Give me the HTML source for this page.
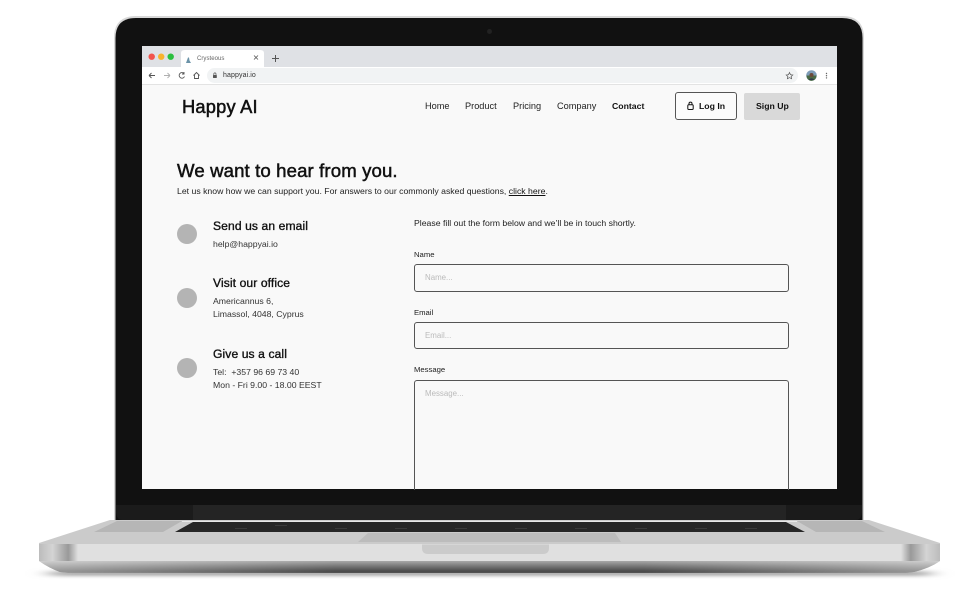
<!DOCTYPE html>
<html><head><meta charset="utf-8"><title>Happy AI</title>
<style>
html,body{margin:0;padding:0;background:#fff}
#r{position:relative;width:960px;height:606px;overflow:hidden;background:#fff;font-family:"Liberation Sans",sans-serif;color:#111;filter:blur(.3px)}
#r svg.bg{position:absolute;left:0;top:0}
.t{position:absolute;white-space:nowrap;line-height:1}
#scr{position:absolute;left:142px;top:46px;width:695px;height:443px;background:#f9f9f9;overflow:hidden}
.box{position:absolute;left:414px;width:372.500px;border:1px solid #555;border-radius:3px;box-sizing:content-box}
.c{position:absolute;left:177px;width:20px;height:20px;border-radius:50%;background:#b4b4b4}
</style></head><body><div id="r">
<svg class="bg" width="960" height="606" viewBox="0 0 960 606">
<defs>
<linearGradient id="f" x1="0" y1="0" x2="0" y2="1"><stop offset="0" stop-color="#a8a8a8"/><stop offset=".4" stop-color="#7a7a7a"/><stop offset=".85" stop-color="#4a4a4a"/><stop offset="1" stop-color="#555"/></linearGradient>
<linearGradient id="fs" x1="0" y1="0" x2="1" y2="0"><stop offset="0" stop-color="#fff" stop-opacity=".45"/><stop offset=".33" stop-color="#fff" stop-opacity="0"/><stop offset=".67" stop-color="#fff" stop-opacity="0"/><stop offset="1" stop-color="#fff" stop-opacity=".45"/></linearGradient>
<linearGradient id="cl" x1="0" y1="0" x2="1" y2="0"><stop offset="0" stop-color="#bcbcbc"/><stop offset=".35" stop-color="#d4d4d4"/><stop offset=".75" stop-color="#999"/><stop offset="1" stop-color="#e0e0e0"/></linearGradient>
<linearGradient id="cr" x1="1" y1="0" x2="0" y2="0"><stop offset="0" stop-color="#bcbcbc"/><stop offset=".35" stop-color="#d4d4d4"/><stop offset=".75" stop-color="#999"/><stop offset="1" stop-color="#e0e0e0"/></linearGradient>
<filter id="b" x="-5%" y="-200%" width="110%" height="500%"><feGaussianBlur stdDeviation="10 1.500"/></filter>
</defs>
<rect x="50" y="571" width="880" height="5" fill="#aaa" filter="url(#b)"/>
<path d="M114 521V38Q114 16 136 16H842Q864 16 864 38V521Z" fill="#d8d8d8"/>
<path d="M115.500 521V38Q115.500 18 136 18H842Q862.500 18 862.500 38V521Z" fill="#111"/>
<path d="M116 505H862V510Q862 520 856 520H122Q116 520 116 510Z" fill="#1b1b1b"/>
<rect x="193" y="505" width="593" height="16" fill="#242424"/>
<circle cx="489.500" cy="31.500" r="2.500" fill="#222"/>
<path d="M110 520H869L940 543V544H39V543Z" fill="#cbcbcb"/>
<path d="M94 532L117 521H182L163 532Z" fill="#b6b6b6"/>
<path d="M885 532L862 521H797L816 532Z" fill="#b6b6b6"/>
<path d="M175 532L193 522H786L805 532Z" fill="#262626"/>
<path d="M358 542L368 533H615L621 542Z" fill="#bcbcbc"/>
<g fill="#3a3a3a"><rect x="235" y="528" width="12" height="1"/><rect x="275" y="525" width="12" height="1"/><rect x="335" y="528" width="12" height="1"/><rect x="395" y="528" width="12" height="1"/><rect x="455" y="528" width="12" height="1"/><rect x="515" y="528" width="12" height="1"/><rect x="575" y="528" width="12" height="1"/><rect x="635" y="528" width="12" height="1"/><rect x="695" y="528" width="12" height="1"/><rect x="745" y="528" width="12" height="1"/></g>
<rect x="182" y="521" width="615" height="1" fill="#e8e8e8"/>
<rect x="39" y="544" width="901" height="17" fill="#e0e0e0"/>
<rect x="39" y="544" width="39" height="17" fill="url(#cl)"/>
<rect x="901" y="544" width="39" height="17" fill="url(#cr)"/>
<path d="M422 544.500H549V548Q549 554 543 554H428Q422 554 422 548Z" fill="#cbcbcb"/>
<path d="M39 561H940Q930 568 914 572L905 573H70L60 572Q49 568 39 561Z" fill="url(#f)"/>
<path d="M39 561H940Q930 568 914 572L905 573H70L60 572Q49 568 39 561Z" fill="url(#fs)"/>
</svg>

<div id="scr">
<svg width="695" height="39" viewBox="0 0 695 39" style="position:absolute;left:0;top:0">
<rect width="695" height="21" fill="#dfe1e5"/>
<rect y="21" width="695" height="17" fill="#fff"/>
<rect y="38" width="695" height="1" fill="#e3e3e3"/>
<circle cx="9.700" cy="10.700" r="3.200" fill="#f2544c"/><circle cx="19.200" cy="10.700" r="3.200" fill="#f8b32e"/><circle cx="28.700" cy="10.700" r="3.200" fill="#2bbf3f"/>
<path d="M39 7Q39 4 43 4H118Q122 4 122 7V21H39Z" fill="#fff"/>
<path d="M44 17L46 11.500L47 11.500L47.500 14.500L49 17Z" fill="#6b93a8"/>
<path d="M112 9.500L116 13.500M116 9.500L112 13.500" stroke="#555" stroke-width=".8"/>
<path d="M133.500 9V16M130 12.500H137" stroke="#555" stroke-width="1"/>
<rect x="65" y="22" width="591" height="15" rx="7.500" fill="#f1f3f4"/>
<path d="M7 29.500H13M7 29.500L9.500 27M7 29.500L9.500 32" stroke="#555" stroke-width=".9" fill="none"/>
<path d="M22 29.500H28M28 29.500L25.500 27M28 29.500L25.500 32" stroke="#b0b0b0" stroke-width=".9" fill="none"/>
<path d="M42 27.500A2.800 2.800 0 1 0 42.500 30.500M42 26V28H40" stroke="#555" stroke-width=".9" fill="none"/>
<path d="M51.500 29.500L54.500 26.500L57.500 29.500M52.500 29V32.500H56.500V29" stroke="#555" stroke-width=".9" fill="none"/>
<rect x="71" y="29" width="3.800" height="3" rx=".5" fill="#555"/><path d="M71.800 29V28A1.100 1.100 0 0 1 74 28V29" stroke="#555" stroke-width=".7" fill="none"/>
<path d="M647.500 26.500L648.500 28.700L650.800 29L649.100 30.500L649.600 32.700L647.500 31.600L645.400 32.700L645.900 30.500L644.200 29L646.500 28.700Z" stroke="#555" stroke-width=".7" fill="none"/>
<circle cx="669.500" cy="29.500" r="5.300" fill="#7e9cb8"/><path d="M664.500 29.500H674.500A5 5 0 0 1 665 32Z" fill="#4a6a45"/><circle cx="669.500" cy="29" r="2" fill="#6b4a3a"/><path d="M666.500 34Q669.500 30.500 672.500 34Z" fill="#2f3a4a"/>
<g fill="#666"><circle cx="684.500" cy="27.500" r=".7"/><circle cx="684.500" cy="29.700" r=".7"/><circle cx="684.500" cy="31.900" r=".7"/></g>
</svg>
<div class="t" style="left:55px;top:9.500px;font-size:6.100px;color:#666">Crysteous</div>
<div class="t" style="left:81px;top:25.500px;font-size:7px;color:#333;letter-spacing:.1px">happyai.io</div>
</div>

<div class="t" style="left:182px;top:98px;font-size:18.300px;letter-spacing:.2px;-webkit-text-stroke:.5px #111">Happy AI</div>
<div class="t" style="left:425px;top:102px;font-size:9.200px;color:#222">Home</div>
<div class="t" style="left:465px;top:102px;font-size:9.200px;color:#222">Product</div>
<div class="t" style="left:513px;top:102px;font-size:9.200px;color:#222">Pricing</div>
<div class="t" style="left:557px;top:102px;font-size:9.200px;color:#222">Company</div>
<div class="t" style="left:612px;top:102px;font-size:8.700px;font-weight:700">Contact</div>
<div style="position:absolute;left:675px;top:92px;width:60px;height:26px;border:1px solid #555;border-radius:3px;background:#fbfbfb"></div>
<svg width="10" height="10" viewBox="0 0 10 10" style="position:absolute;left:686px;top:101px"><rect x="1.800" y="3.800" width="5.400" height="4.700" rx="1" fill="none" stroke="#111" stroke-width="1"/><path d="M3 3.800V2.600A1.500 1.500 0 0 1 6 2.600V3.800" fill="none" stroke="#111" stroke-width="1"/></svg>
<div class="t" style="left:699px;top:102px;font-size:8.700px;font-weight:700">Log In</div>
<div style="position:absolute;left:744px;top:93px;width:56px;height:27px;border-radius:2px;background:#d9d9d9"></div>
<div class="t" style="left:756px;top:102px;font-size:8.700px;font-weight:700">Sign Up</div>

<div class="t" style="left:177px;top:162px;font-size:18.600px;letter-spacing:.12px;-webkit-text-stroke:.5px #111">We want to hear from you.</div>
<div class="t" style="left:177px;top:187px;font-size:8.700px;color:#222">Let us know how we can support you. For answers to our commonly asked questions, <span style="text-decoration:underline;color:#111">click here</span>.</div>

<div class="c" style="top:224px"></div>
<div class="t" style="left:213px;top:219.500px;font-size:12.100px;letter-spacing:.1px;-webkit-text-stroke:.35px #111">Send us an email</div>
<div class="t" style="left:213px;top:240px;font-size:8.700px;color:#333">help@happyai.io</div>

<div class="c" style="top:288px"></div>
<div class="t" style="left:213px;top:277px;font-size:12.100px;letter-spacing:.1px;-webkit-text-stroke:.35px #111">Visit our office</div>
<div class="t" style="left:213px;top:297px;font-size:8.700px;color:#333">Americannus 6,</div>
<div class="t" style="left:213px;top:310px;font-size:8.700px;color:#333">Limassol, 4048, Cyprus</div>

<div class="c" style="top:358px"></div>
<div class="t" style="left:213px;top:348px;font-size:12.100px;letter-spacing:.1px;-webkit-text-stroke:.35px #111">Give us a call</div>
<div class="t" style="left:213px;top:368px;font-size:8.700px;color:#333">Tel:&nbsp; +357 96 69 73 40</div>
<div class="t" style="left:213px;top:381px;font-size:8.700px;color:#333">Mon - Fri 9.00 - 18.00 EEST</div>

<div class="t" style="left:414px;top:219px;font-size:8.700px;color:#222">Please fill out the form below and we’ll be in touch shortly.</div>

<div class="t" style="left:414px;top:250.500px;font-size:7.700px;color:#222">Name</div>
<div class="box" style="top:264px;height:26px"></div>
<div class="t" style="left:425px;top:274px;font-size:7.900px;color:#bbb">Name...</div>
<div class="t" style="left:414px;top:308.500px;font-size:7.700px;color:#222">Email</div>
<div class="box" style="top:322px;height:25px"></div>
<div class="t" style="left:425px;top:331.500px;font-size:7.900px;color:#bbb">Email...</div>
<div class="t" style="left:414px;top:366px;font-size:7.700px;color:#222">Message</div>
<div style="position:absolute;left:414px;top:380px;width:372.500px;height:109px;border:1px solid #555;border-bottom:none;border-radius:3px 3px 0 0"></div>
<div class="t" style="left:425px;top:389.500px;font-size:7.900px;color:#bbb">Message...</div>
</div></body></html>
